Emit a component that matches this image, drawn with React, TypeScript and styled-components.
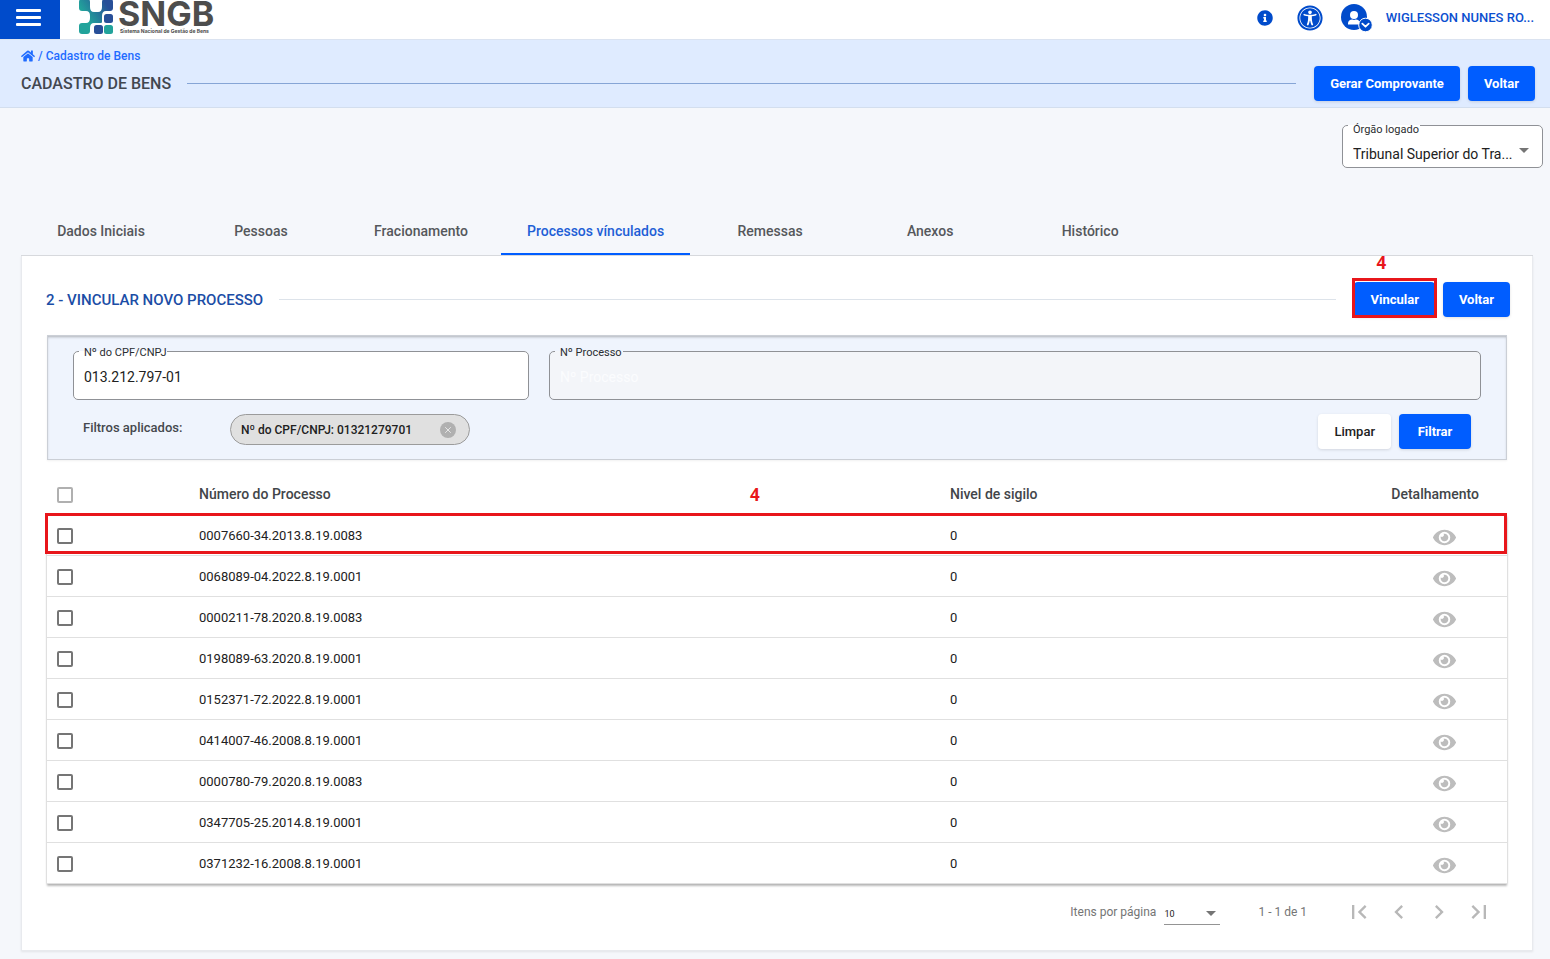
import React from "react";
import styled, { createGlobalStyle } from "styled-components";
import { FaEye, FaHome, FaInfoCircle, FaUniversalAccess } from "react-icons/fa";

const GlobalStyle = createGlobalStyle`
  *, *::before, *::after { box-sizing: border-box; }
  body {
    margin: 0;
    background: #f5f7fb;
    color: #212121;
    font-family: Roboto, "Liberation Sans", sans-serif;
    font-size: 13px;
  }
  button, input, select { font-family: inherit; }
`;

const Page = styled.div`
  padding-bottom: 8px;
`;

const TopBar = styled.header`
  display: flex;
  align-items: stretch;
  height: 40px;
  background: #fff;
  border-bottom: 1px solid #dbe3f0;
`;

const MenuButton = styled.button`
  display: flex;
  flex-direction: column;
  align-items: center;
  gap: 4px;
  width: 60px;
  padding: 9px 3px 0 0;
  border: 0;
  background: #004bcb;
  cursor: pointer;
`;

const MenuLine = styled.span`
  width: 25px;
  height: 3px;
  border-radius: 1px;
  background: #fff;
`;

const Brand = styled.a`
  display: flex;
  gap: 5px;
  margin-left: 19px;
  color: #4d4d4d;
  text-decoration: none;
`;

const BrandText = styled.span`
  display: flex;
  flex-direction: column;
  font-family: Inter, sans-serif;
  font-weight: 700;
`;

const BrandName = styled.span`
  font-size: 34px;
  line-height: 28px;
`;

const BrandTagline = styled.span`
  padding-left: 2px;
  font-size: 5px;
  line-height: 6px;
  white-space: nowrap;
`;

const UserArea = styled.div`
  display: flex;
  align-items: center;
  gap: 18px;
  margin-left: auto;
  padding: 0 16px 3px 0;
`;

const IconGroup = styled.div`
  display: flex;
  align-items: center;
  gap: 24px;
`;

const IconButton = styled.button`
  display: flex;
  padding: 0;
  border: 0;
  background: none;
  color: #004bcb;
  cursor: pointer;
`;

const UserButton = styled.button`
  display: flex;
  align-items: center;
  gap: 13px;
  padding: 0;
  border: 0;
  background: none;
  color: #0b4fd0;
  font-size: 13px;
  font-weight: 500;
  line-height: 16px;
  cursor: pointer;
`;

const PageHeader = styled.section`
  padding: 8px 15px 6px 21px;
  background: #dfebff;
  border-bottom: 1px solid #d3deee;
`;

const Breadcrumb = styled.nav`
  display: flex;
  align-items: center;
  gap: 3px;
  height: 16px;
  margin-bottom: 2px;
  color: #1f6bff;
  font-size: 12px;
  font-weight: 500;
  a { display: flex; color: inherit; text-decoration: none; }
`;

const TitleRow = styled.div`
  display: flex;
  align-items: center;
`;

const PageTitle = styled.h1`
  margin: 0;
  color: #424750;
  font-size: 16px;
  font-weight: 500;
  line-height: 20px;
`;

const Rule = styled.span<{ $color: string }>`
  flex: 1;
  height: 1px;
  margin: 0 18px 0 16px;
  background: ${(p) => p.$color};
`;

const Button = styled.button<{ $plain?: boolean }>`
  height: 35px;
  padding: 0 16px;
  border: 0;
  border-radius: 4px;
  background: ${(p) => (p.$plain ? "#fff" : "#005dff")};
  color: ${(p) => (p.$plain ? "#212121" : "#fff")};
  box-shadow: 0 1px 3px rgba(0, 0, 0, 0.12);
  font-size: 13px;
  font-weight: ${(p) => (p.$plain ? 500 : 700)};
  line-height: 16px;
  white-space: nowrap;
  cursor: pointer;
`;

const ButtonGroup = styled.div`
  display: flex;
  gap: 8px;
`;

const Fieldset = styled.fieldset<{ $disabled?: boolean; $low?: boolean }>`
  min-width: 0;
  margin: 0;
  padding: 0 5px ${(p) => (p.$low ? 0 : 5)}px;
  border: 1px solid #8f9196;
  border-radius: 5px;
  background: ${(p) => (p.$disabled ? "#f3f5f9" : "#fff")};
  legend {
    padding: ${(p) => (p.$low ? 10 : 3)}px 1px 0 5px;
    color: #2a2d31;
    font-size: 11px;
    line-height: 12px;
  }
`;

const TextInput = styled.input`
  display: block;
  width: 100%;
  height: 35px;
  padding: 0 5px;
  border: 0;
  outline: 0;
  background: none;
  color: #212121;
  font-size: 14px;
  &::placeholder { color: #fbfcfe; opacity: 1; }
`;

const AgencyRow = styled.div`
  display: flex;
  justify-content: flex-end;
  padding: 6px 7px 39px;
`;

const SelectBox = styled.div`
  position: relative;
  svg { position: absolute; pointer-events: none; }
`;

const AgencySelectBox = styled(SelectBox)`
  width: 189px;
  svg { right: 8px; top: 12px; }
`;

const AgencySelect = styled.select`
  appearance: none;
  display: block;
  width: 100%;
  height: 31px;
  padding: 5px 20px 0 5px;
  border: 0;
  background: none;
  color: #212121;
  font-size: 14px;
`;

const TabList = styled.div`
  display: flex;
  margin: 0 17px 0 21px;
  border-bottom: 1px solid #d8dade;
`;

const Tab = styled.button<{ $active?: boolean }>`
  min-width: 160px;
  height: 48px;
  padding: 2px 26px 0;
  border: 0;
  border-bottom: 2px solid ${(p) => (p.$active ? "#005dff" : "transparent")};
  background: none;
  color: ${(p) => (p.$active ? "#1f5fd6" : "#55585c")};
  font-size: 14px;
  font-weight: 500;
  white-space: nowrap;
  cursor: pointer;
`;

const Panel = styled.main`
  margin: 0 17px 0 21px;
  background: #fff;
  border: 1px solid #e8eaee;
  border-top: 0;
  box-shadow: 0 1px 2px rgba(0, 0, 0, 0.08);
`;

const SectionHead = styled.div`
  display: flex;
  align-items: center;
  padding: 26px 22px 18px 24px;
`;

const SectionTitle = styled.h2`
  margin: 0;
  color: #1b4da6;
  font-size: 15px;
  font-weight: 500;
  line-height: 20px;
`;

const Marked = styled.div`
  position: relative;
`;

const MarkNumber = styled.span`
  position: absolute;
  color: #e8161b;
  font-family: "Open Sans", sans-serif;
  font-size: 17px;
  font-weight: 700;
  line-height: 20px;
`;

const ButtonMarkNumber = styled(MarkNumber)`
  top: -29px;
  left: 22px;
`;

const TableMarkNumber = styled(MarkNumber)`
  top: 11px;
  left: calc(50% - 27px);
`;

const MarkFrame = styled.span`
  position: absolute;
  border: 3px solid #e8161b;
  pointer-events: none;
`;

const ButtonMarkFrame = styled(MarkFrame)`
  inset: -4px -2px -1px -2px;
`;

const RowMarkFrame = styled(MarkFrame)`
  top: 39px;
  left: -2px;
  right: 0;
  height: 41px;
`;

const PanelBody = styled.div`
  padding: 0 25px;
`;

const Filters = styled.form`
  padding: 8px 25px 10px;
  border: 1px solid #cbcfd6;
  background: #eff4fd;
  box-shadow: inset 0 2px 3px -1px rgba(0, 0, 0, 0.28), 0 1px 2px rgba(0, 0, 0, 0.06);
`;

const FilterFields = styled.div`
  display: grid;
  grid-template-columns: repeat(12, minmax(0, 1fr));
  column-gap: 20px;
  & > :first-child { grid-column: span 4; }
  & > :last-child { grid-column: span 8; }
`;

const FilterFooter = styled.div`
  display: flex;
  align-items: flex-start;
  padding: 14px 10px 0;
`;

const AppliedLabel = styled.span`
  width: 147px;
  color: #45484d;
  font-weight: 500;
  line-height: 28px;
`;

const Chip = styled.span`
  display: flex;
  align-items: center;
  justify-content: space-between;
  width: 240px;
  height: 31px;
  padding: 0 13px 0 10px;
  border: 1px solid #9b9b9b;
  border-radius: 16px;
  background: #e0e0e0;
  font-size: 12px;
  font-weight: 500;
`;

const ChipClose = styled.button`
  display: flex;
  padding: 0;
  border: 0;
  background: none;
  cursor: pointer;
`;

const FooterButtons = styled(ButtonGroup)`
  margin-left: auto;
  button { min-width: 72px; }
`;

const TableWrap = styled.div`
  position: relative;
  margin-top: 14px;
`;

const Table = styled.table`
  width: 100%;
  table-layout: fixed;
  border-collapse: separate;
  border-spacing: 0;
  tbody { box-shadow: 0 2px 2px rgba(0, 0, 0, 0.26), 0 0 2px rgba(0, 0, 0, 0.12); }
  col:nth-child(1) { width: 142px; }
  col:nth-child(3) { width: 360px; }
  col:nth-child(4) { width: 207px; }
`;

const HeadCell = styled.th<{ $right?: boolean }>`
  height: 41px;
  padding: 0 ${(p) => (p.$right ? 28 : 10)}px 0 10px;
  border-bottom: 1px solid #e0e0e0;
  color: #424549;
  font-size: 14px;
  font-weight: 500;
  text-align: ${(p) => (p.$right ? "right" : "left")};
`;

const Cell = styled.td<{ $right?: boolean }>`
  height: 41px;
  padding: 0 ${(p) => (p.$right ? 51 : 10)}px 0 10px;
  border-bottom: 1px solid #e0e0e0;
  font-size: 13px;
  text-align: ${(p) => (p.$right ? "right" : "left")};
`;

const Checkbox = styled.input`
  appearance: none;
  display: block;
  width: 16px;
  height: 16px;
  margin: 2px 0 0;
  border: 2px solid #757575;
  border-radius: 2px;
  background: #fff;
  &:disabled { border-color: #b0b0b0; }
  &:checked { background: #005dff; }
`;

const EyeButton = styled.button`
  display: inline-flex;
  padding: 4px 0 0;
  border: 0;
  background: none;
  color: #bdbdbd;
  vertical-align: middle;
  cursor: pointer;
`;

const Paginator = styled.div`
  display: flex;
  align-items: center;
  justify-content: flex-end;
  padding: 8px 8px 18px;
  color: #757575;
  font-size: 12px;
`;

const PageSizeBox = styled(SelectBox)`
  width: 56px;
  margin: 0 38px 0 8px;
  svg { right: 4px; top: 12px; }
`;

const PageSize = styled.select`
  appearance: none;
  display: block;
  width: 100%;
  height: 26px;
  padding: 4px 0 0;
  border: 0;
  border-bottom: 1px solid #949494;
  border-radius: 0;
  background: none;
  color: #212121;
  font-size: 9px;
`;

const PageRange = styled.span`
  margin-right: 32px;
`;

const PageButton = styled.button`
  display: flex;
  align-items: center;
  justify-content: center;
  width: 40px;
  height: 40px;
  padding: 0;
  border: 0;
  background: none;
  color: #b8b8b8;
`;

const BrandMark = () => (
  <svg width="34" height="35" viewBox="0 0 34 35" aria-hidden="true">
    <defs>
      <linearGradient id="brand" gradientUnits="userSpaceOnUse" x1="0" y1="24" x2="32" y2="4">
        <stop offset="0.25" stopColor="#22a39b" />
        <stop offset="0.9" stopColor="#284f98" />
      </linearGradient>
    </defs>
    <g fill="url(#brand)">
      <rect x="0" y="-1" width="11" height="12" rx="3" />
      <rect x="23" y="-1" width="11" height="12" rx="3" />
      <rect x="11" y="12" width="12" height="11" rx="1" />
      <rect x="0" y="23" width="11" height="11" rx="3" />
      <path d="M7 11Q11 11 11 16L15 12Q11 12 11 7Z" />
      <path d="M27 11Q23 11 23 16L19 12Q23 12 23 7Z" />
      <path d="M7 23Q11 23 11 18L15 23Q11 23 11 28Z" />
    </g>
    <rect x="25" y="14" width="9" height="9" rx="2.5" fill="#284f98" />
    <rect x="15" y="25" width="9" height="9" rx="2.5" fill="#284f98" />
    <rect x="25" y="25" width="9" height="9" rx="2.5" fill="#22a39b" />
  </svg>
);

const UserIcon = () => (
  <svg width="32" height="30" viewBox="0 0 32 30" aria-hidden="true">
    <circle cx="13" cy="14" r="13" fill="#004bcb" />
    <circle cx="13" cy="12" r="4" fill="#fff" />
    <path d="M7 21.5v-1.300c0-2.200 2-3.700 4.200-3.700.6.300 1.200.4 1.800.4s1.200-.1 1.800-.4c2.200 0 4.200 1.500 4.200 3.700v1.300z" fill="#fff" />
    <circle cx="24.500" cy="22" r="6.800" fill="#004bcb" stroke="#fff" strokeWidth="1" />
    <path d="M21.300 20.700l3.200 3 3.200-3" fill="none" stroke="#fff" strokeWidth="1.800" strokeLinecap="round" strokeLinejoin="round" />
  </svg>
);

const Arrow = () => (
  <svg width="10" height="5" viewBox="0 0 10 5" aria-hidden="true">
    <path d="M0 0h10L5 5z" fill="#757575" />
  </svg>
);

const CloseIcon = () => (
  <svg width="16" height="16" viewBox="0 0 16 16" aria-hidden="true">
    <circle cx="8" cy="8" r="8" fill="#b0b0b0" />
    <path d="M5.200 5.200l5.600 5.600M10.800 5.200l-5.600 5.600" stroke="#e6e6e6" strokeWidth="1" />
  </svg>
);

const tabs = ["Dados Iniciais", "Pessoas", "Fracionamento", "Processos vínculados", "Remessas", "Anexos", "Histórico"];

const processes = [
  "0007660-34.2013.8.19.0083",
  "0068089-04.2022.8.19.0001",
  "0000211-78.2020.8.19.0083",
  "0198089-63.2020.8.19.0001",
  "0152371-72.2022.8.19.0001",
  "0414007-46.2008.8.19.0001",
  "0000780-79.2020.8.19.0083",
  "0347705-25.2014.8.19.0001",
  "0371232-16.2008.8.19.0001",
];

const pageButtons = [
  { label: "Primeira página", path: "M18.41 16.59L13.82 12l4.59-4.59L17 6l-6 6 6 6zM6 6h2v12H6z" },
  { label: "Página anterior", path: "M15.41 7.41L14 6l-6 6 6 6 1.41-1.41L10.83 12z" },
  { label: "Próxima página", path: "M10 6L8.59 7.41 13.17 12l-4.58 4.59L10 18l6-6z" },
  { label: "Última página", path: "M5.59 7.41L10.18 12l-4.59 4.59L7 18l6-6-6-6zM16 6h2v12h-2z" },
];

export default function App() {
  return (
    <Page>
      <GlobalStyle />
      <TopBar>
        <MenuButton aria-label="Menu">
          <MenuLine />
          <MenuLine />
          <MenuLine />
        </MenuButton>
        <Brand href="#">
          <BrandMark />
          <BrandText>
            <BrandName>SNGB</BrandName>
            <BrandTagline>Sistema Nacional de Gestão de Bens</BrandTagline>
          </BrandText>
        </Brand>
        <UserArea>
          <IconGroup>
            <IconButton aria-label="Informações"><FaInfoCircle size={16} /></IconButton>
            <IconButton aria-label="Acessibilidade"><FaUniversalAccess size={26} /></IconButton>
          </IconGroup>
          <UserButton>
            <UserIcon />
            WIGLESSON NUNES RO...
          </UserButton>
        </UserArea>
      </TopBar>

      <PageHeader>
        <Breadcrumb aria-label="Trilha">
          <a href="#" aria-label="Início"><FaHome size={14} /></a>
          <span>/</span>
          <a href="#">Cadastro de Bens</a>
        </Breadcrumb>
        <TitleRow>
          <PageTitle>CADASTRO DE BENS</PageTitle>
          <Rule $color="#86a5d6" />
          <ButtonGroup>
            <Button>Gerar Comprovante</Button>
            <Button>Voltar</Button>
          </ButtonGroup>
        </TitleRow>
      </PageHeader>

      <AgencyRow>
        <Fieldset $low>
          <legend><label htmlFor="agency">Órgão logado</label></legend>
          <AgencySelectBox>
            <AgencySelect id="agency">
              <option>Tribunal Superior do Tra...</option>
            </AgencySelect>
            <Arrow />
          </AgencySelectBox>
        </Fieldset>
      </AgencyRow>

      <TabList role="tablist">
        {tabs.map((name, i) => (
          <Tab key={name} role="tab" aria-selected={i === 3} $active={i === 3}>{name}</Tab>
        ))}
      </TabList>

      <Panel>
        <SectionHead>
          <SectionTitle>2 - VINCULAR NOVO PROCESSO</SectionTitle>
          <Rule $color="#dde3ea" />
          <ButtonGroup>
            <Marked>
              <Button>Vincular</Button>
              <ButtonMarkFrame />
              <ButtonMarkNumber>4</ButtonMarkNumber>
            </Marked>
            <Button>Voltar</Button>
          </ButtonGroup>
        </SectionHead>

        <PanelBody>
          <Filters onSubmit={(e) => e.preventDefault()}>
            <FilterFields>
              <Fieldset>
                <legend><label htmlFor="cpf">Nº do CPF/CNPJ</label></legend>
                <TextInput id="cpf" defaultValue="013.212.797-01" />
              </Fieldset>
              <Fieldset $disabled>
                <legend><label htmlFor="process">Nº Processo</label></legend>
                <TextInput id="process" placeholder="Nº Processo" disabled />
              </Fieldset>
            </FilterFields>
            <FilterFooter>
              <AppliedLabel>Filtros aplicados:</AppliedLabel>
              <Chip>
                Nº do CPF/CNPJ: 01321279701
                <ChipClose type="button" aria-label="Remover filtro"><CloseIcon /></ChipClose>
              </Chip>
              <FooterButtons>
                <Button type="button" $plain>Limpar</Button>
                <Button type="submit">Filtrar</Button>
              </FooterButtons>
            </FilterFooter>
          </Filters>

          <TableWrap>
            <Table>
              <colgroup><col /><col /><col /><col /></colgroup>
              <thead>
                <tr>
                  <HeadCell><Checkbox type="checkbox" disabled aria-label="Selecionar todos" /></HeadCell>
                  <HeadCell>Número do Processo</HeadCell>
                  <HeadCell>Nivel de sigilo</HeadCell>
                  <HeadCell $right>Detalhamento</HeadCell>
                </tr>
              </thead>
              <tbody>
                {processes.map((number) => (
                  <tr key={number}>
                    <Cell><Checkbox type="checkbox" aria-label={`Selecionar ${number}`} /></Cell>
                    <Cell>{number}</Cell>
                    <Cell>0</Cell>
                    <Cell $right>
                      <EyeButton aria-label={`Detalhar ${number}`}><FaEye size={23} /></EyeButton>
                    </Cell>
                  </tr>
                ))}
              </tbody>
            </Table>
            <RowMarkFrame />
            <TableMarkNumber>4</TableMarkNumber>
          </TableWrap>

          <Paginator>
            <label htmlFor="page-size">Itens por página</label>
            <PageSizeBox>
              <PageSize id="page-size"><option>10</option></PageSize>
              <Arrow />
            </PageSizeBox>
            <PageRange>1 - 1 de 1</PageRange>
            {pageButtons.map((b) => (
              <PageButton key={b.label} aria-label={b.label}>
                <svg width="28" height="28" viewBox="0 0 24 24" aria-hidden="true">
                  <path d={b.path} fill="currentColor" />
                </svg>
              </PageButton>
            ))}
          </Paginator>
        </PanelBody>
      </Panel>
    </Page>
  );
}
